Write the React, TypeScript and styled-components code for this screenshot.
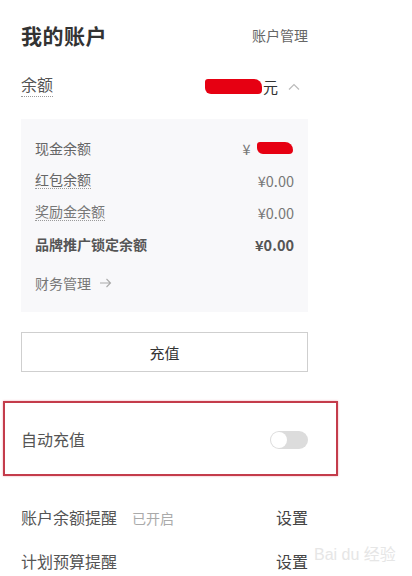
import React from "react";
import styled, { createGlobalStyle } from "styled-components";

const Global = createGlobalStyle`
  html, body { margin: 0; padding: 0; background: #fff; }
  body { font-family: "Noto Sans CJK SC", "Noto Sans", "Liberation Sans", sans-serif; color: #444; }
`;

const Wrap = styled.div`
  position: relative;
  height: 576px;
  overflow: hidden;
`;

const Page = styled.div`
  width: 287px;
  padding: 0 0 0 21px;
  display: flex;
  flex-direction: column;
`;

const Header = styled.div`
  height: 70px;
  display: flex;
  align-items: center;
  justify-content: space-between;
`;

const Title = styled.h1`
  margin: 0;
  font-size: 21px;
  font-weight: 700;
  color: #333;
  letter-spacing: 0.5px;
`;

const Link = styled.span`
  font-size: 14px;
  color: #666;
`;

const Row = styled.div<{ $h: number }>`
  height: ${(p) => p.$h}px;
  display: flex;
  align-items: center;
  justify-content: space-between;
  position: relative;
`;

const Label = styled.span<{ $size?: number; $bold?: boolean; $dotted?: boolean; $color?: string }>`
  font-size: ${(p) => p.$size ?? 14}px;
  font-weight: ${(p) => (p.$bold ? 700 : 400)};
  color: ${(p) => p.$color ?? "#555"};
  border-bottom: ${(p) => (p.$dotted ? "1px dotted #9a9a9a" : "none")};
  padding-bottom: ${(p) => (p.$dotted ? "1px" : "0")};
  line-height: 1.2;
`;

const Amount = styled.span`
  display: flex;
  align-items: center;
  font-size: 15px;
  color: #333;
`;

const Scribble = styled.span<{ $w: number; $h: number }>`
  display: inline-block;
  width: ${(p) => p.$w}px;
  height: ${(p) => p.$h}px;
  background: #e60012;
  border-radius: 3px 8px 4px 6px;
  margin-right: 1px;
`;

const Chevron = styled.svg`
  margin-left: 10px;
  margin-right: 8px;
`;

const Panel = styled.div`
  margin-top: 17px;
  background: #f8f8fa;
  padding: 13px 14px 13px 14px;
  display: flex;
  flex-direction: column;
`;

const Value = styled.span<{ $bold?: boolean }>`
  font-size: 14.5px;
  font-weight: ${(p) => (p.$bold ? 700 : 400)};
  color: ${(p) => (p.$bold ? "#555" : "#777")};
  display: flex;
  align-items: center;
`;

const MoreRow = styled.div`
  height: 32px;
  margin-top: 7px;
  display: flex;
  align-items: center;
  gap: 8px;
`;

const Button = styled.button`
  margin-top: 20px;
  height: 40px;
  width: 287px;
  border: 1px solid #cfcfcf;
  background: #fff;
  font-family: inherit;
  font-size: 15px;
  color: #333;
  padding: 0;
`;

const AutoRow = styled(Row)`
  margin-top: 40px;
`;

const RedFrame = styled.div`
  position: absolute;
  left: -18px;
  top: -11px;
  width: 331px;
  height: 71px;
  border: 2px solid #c43c4b;
  box-shadow: 0 0 2px #f0a8b0;
  pointer-events: none;
`;

const Toggle = styled.span`
  width: 38px;
  height: 18px;
  border-radius: 9px;
  background: #dcdcdc;
  position: relative;
  &::after {
    content: "";
    position: absolute;
    left: 1px;
    top: 1px;
    width: 16px;
    height: 16px;
    border-radius: 50%;
    background: #fff;
  }
`;

const LeftGroup = styled.span`
  display: flex;
  align-items: center;
  gap: 15px;
`;

const Watermark = styled.div`
  position: absolute;
  left: 314px;
  top: 541px;
  font-family: "Liberation Sans", "Noto Sans CJK SC", sans-serif;
  font-size: 16px;
  color: #e6e6e6;
  white-space: nowrap;
  pointer-events: none;
`;

export default function App() {
  return (
    <Wrap>
      <Global />
      <Page>
        <Header>
          <Title>我的账户</Title>
          <Link>账户管理</Link>
        </Header>
        <Row $h={32}>
          <Label $size={16} $dotted $color="#555">余额</Label>
          <Amount>
            <Scribble $w={57} $h={15} />
            元
            <Chevron width="12" height="7" viewBox="0 0 12 7">
              <polyline points="1,6.5 6,1.5 11,6.5" fill="none" stroke="#bbb" strokeWidth="1.2" />
            </Chevron>
          </Amount>
        </Row>
        <Panel>
          <Row $h={32}>
            <Label $color="#666">现金余额</Label>
            <Value>
              ¥&nbsp;&nbsp;<Scribble $w={36} $h={12} />
            </Value>
          </Row>
          <Row $h={32}>
            <Label $dotted $color="#666">红包余额</Label>
            <Value>¥0.00</Value>
          </Row>
          <Row $h={32}>
            <Label $dotted $color="#777">奖励金余额</Label>
            <Value>¥0.00</Value>
          </Row>
          <Row $h={32}>
            <Label $bold $color="#555">品牌推广锁定余额</Label>
            <Value $bold>¥0.00</Value>
          </Row>
          <MoreRow>
            <Label $color="#777">财务管理</Label>
            <svg width="13" height="10" viewBox="0 0 13 10">
              <path d="M1 5 H11.5 M7.5 1 L11.5 5 L7.5 9" fill="none" stroke="#aaa" strokeWidth="1.1" />
            </svg>
          </MoreRow>
        </Panel>
        <Button>充值</Button>
        <AutoRow $h={56}>
          <RedFrame />
          <Label $size={16} $color="#555">自动充值</Label>
          <Toggle />
        </AutoRow>
        <Row $h={44} style={{ marginTop: 28 }}>
          <LeftGroup>
            <Label $size={16} $color="#555">账户余额提醒</Label>
            <Label $size={14} $color="#aaa">已开启</Label>
          </LeftGroup>
          <Label $size={16} $color="#444">设置</Label>
        </Row>
        <Row $h={44}>
          <Label $size={16} $color="#555">计划预算提醒</Label>
          <Label $size={16} $color="#444">设置</Label>
        </Row>
      </Page>
      <Watermark>Bai du 经验</Watermark>
    </Wrap>
  );
}
